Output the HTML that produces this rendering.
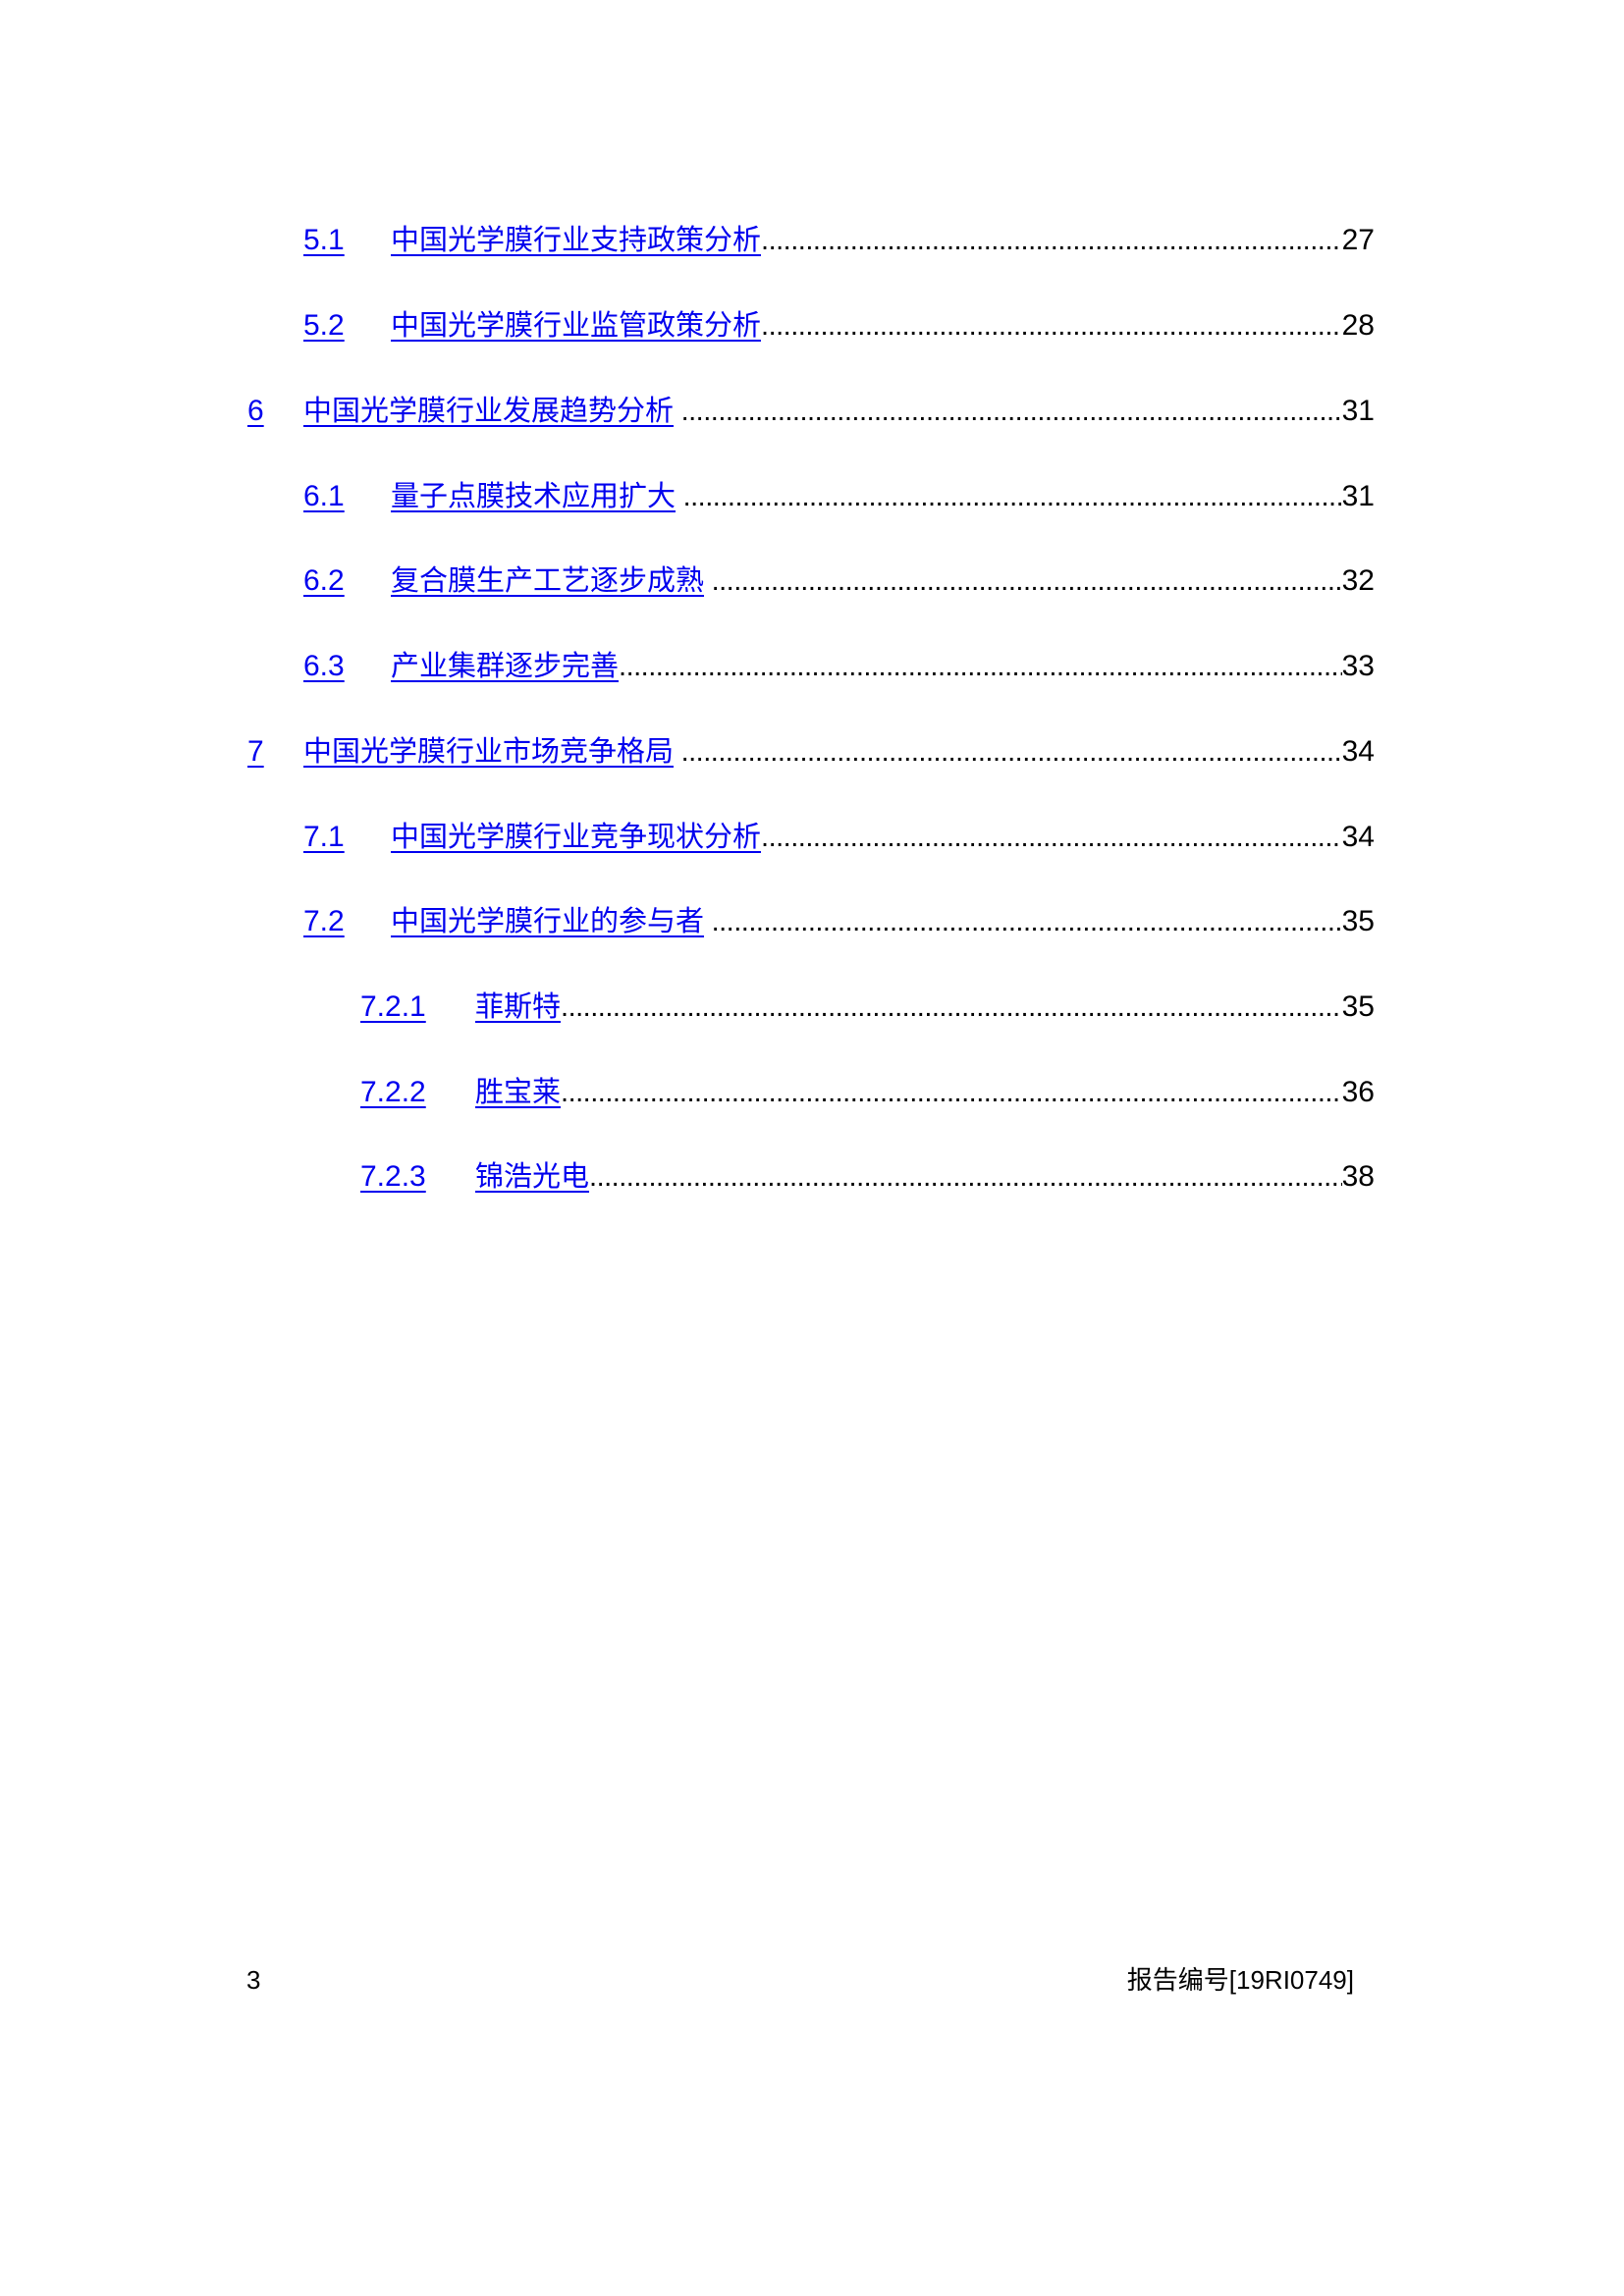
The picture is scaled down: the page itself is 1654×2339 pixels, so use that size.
<!DOCTYPE html>
<html><head><meta charset="utf-8"><style>
body{margin:0;width:1654px;height:2339px;background:#fff;position:relative;font-family:"Liberation Sans","Noto Sans CJK SC",sans-serif;}
.r{position:absolute;left:0;width:1654px;height:40px;font-size:29px;line-height:40px;color:#0000ee;}
.n{position:absolute;text-decoration:underline;text-underline-offset:5px;text-decoration-thickness:2px;white-space:nowrap;font-size:30px}
.t{position:absolute;display:flex;right:254px;white-space:nowrap}
.t a{color:#0000ee;text-decoration:underline;text-underline-offset:5px;text-decoration-thickness:2px;flex:none}
.d{flex:1;overflow:hidden;color:#000;letter-spacing:-0.5px;}
.p{color:#000;flex:none;font-size:30px}
.f{position:absolute;top:2000px;font-size:26px;line-height:34px;color:#000;font-family:"Liberation Sans","Noto Sans CJK SC",sans-serif}
</style></head><body>
<div class="r" style="top:225px"><span class="n" style="left:309px">5.1</span><div class="t" style="left:398px"><a>中国光学膜行业支持政策分析</a><span class="d">....................................................................................................................................................................................................</span><span class="p">27</span></div></div>
<div class="r" style="top:312px"><span class="n" style="left:309px">5.2</span><div class="t" style="left:398px"><a>中国光学膜行业监管政策分析</a><span class="d">....................................................................................................................................................................................................</span><span class="p">28</span></div></div>
<div class="r" style="top:399px"><span class="n" style="left:252px">6</span><div class="t" style="left:309px"><a>中国光学膜行业发展趋势分析</a><span class="d">&nbsp;....................................................................................................................................................................................................</span><span class="p">31</span></div></div>
<div class="r" style="top:486px"><span class="n" style="left:309px">6.1</span><div class="t" style="left:398px"><a>量子点膜技术应用扩大</a><span class="d">&nbsp;....................................................................................................................................................................................................</span><span class="p">31</span></div></div>
<div class="r" style="top:572px"><span class="n" style="left:309px">6.2</span><div class="t" style="left:398px"><a>复合膜生产工艺逐步成熟</a><span class="d">&nbsp;....................................................................................................................................................................................................</span><span class="p">32</span></div></div>
<div class="r" style="top:659px"><span class="n" style="left:309px">6.3</span><div class="t" style="left:398px"><a>产业集群逐步完善</a><span class="d">....................................................................................................................................................................................................</span><span class="p">33</span></div></div>
<div class="r" style="top:746px"><span class="n" style="left:252px">7</span><div class="t" style="left:309px"><a>中国光学膜行业市场竞争格局</a><span class="d">&nbsp;....................................................................................................................................................................................................</span><span class="p">34</span></div></div>
<div class="r" style="top:833px"><span class="n" style="left:309px">7.1</span><div class="t" style="left:398px"><a>中国光学膜行业竞争现状分析</a><span class="d">....................................................................................................................................................................................................</span><span class="p">34</span></div></div>
<div class="r" style="top:919px"><span class="n" style="left:309px">7.2</span><div class="t" style="left:398px"><a>中国光学膜行业的参与者</a><span class="d">&nbsp;....................................................................................................................................................................................................</span><span class="p">35</span></div></div>
<div class="r" style="top:1006px"><span class="n" style="left:367px">7.2.1</span><div class="t" style="left:484px"><a>菲斯特</a><span class="d">....................................................................................................................................................................................................</span><span class="p">35</span></div></div>
<div class="r" style="top:1093px"><span class="n" style="left:367px">7.2.2</span><div class="t" style="left:484px"><a>胜宝莱</a><span class="d">....................................................................................................................................................................................................</span><span class="p">36</span></div></div>
<div class="r" style="top:1179px"><span class="n" style="left:367px">7.2.3</span><div class="t" style="left:484px"><a>锦浩光电</a><span class="d">....................................................................................................................................................................................................</span><span class="p">38</span></div></div>
<div class="f" style="left:251px">3</div>
<div class="f" style="right:275px">报告编号[19RI0749]</div>
</body></html>
